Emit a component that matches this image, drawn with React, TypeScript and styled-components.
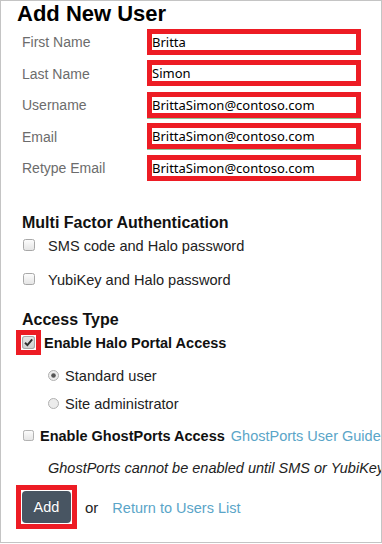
import React from 'react';
import styled, { createGlobalStyle } from 'styled-components';

const fields = [
  { label: 'First Name', value: 'Britta', underline: false },
  { label: 'Last Name', value: 'Simon', underline: false },
  { label: 'Username', value: 'BrittaSimon@contoso.com', underline: true },
  { label: 'Email', value: 'BrittaSimon@contoso.com', underline: true },
  { label: 'Retype Email', value: 'BrittaSimon@contoso.com', underline: false },
];

const Check = ({ checked = false, size = 12 }: { checked?: boolean; size?: number }) => (
  <svg width={size} height={size} viewBox="0 0 12 12">
    <defs>
      <linearGradient id={checked ? 'cbOn' : 'cbOff'} x1="0" y1="0" x2="0" y2="1">
        <stop offset="0" stopColor={checked ? '#e6e6e6' : '#fdfdfd'} />
        <stop offset="1" stopColor={checked ? '#cfcfcf' : '#e4e4e4'} />
      </linearGradient>
    </defs>
    <rect x="0.5" y="0.5" width="11" height="11" rx="2" fill={`url(#${checked ? 'cbOn' : 'cbOff'})`} stroke="#a8a8a8" />
    {checked && <path d="M2.8 6.2 L5 8.4 L9.4 3.2" fill="none" stroke="#2e2e2e" strokeWidth="1.8" />}
  </svg>
);

const Radio = ({ checked = false }: { checked?: boolean }) => (
  <svg width="11" height="11" viewBox="0 0 11 11">
    <circle cx="5.5" cy="5.5" r="5" fill="#ececec" stroke="#b0b0b0" />
    {checked && <circle cx="5.5" cy="5.5" r="2.3" fill="#555" />}
  </svg>
);

const AddUser = () => {
  return (
    <Frame>
      <GlobalStyle />
      <Title>Add New User</Title>
      <Body>
        <Form>
          {fields.map((f) => (
            <React.Fragment key={f.label}>
              <Label>{f.label}</Label>
              <Field underline={f.underline}>{f.value}</Field>
            </React.Fragment>
          ))}
        </Form>

        <Heading style={{ marginTop: 31 }}>Multi Factor Authentication</Heading>
        <Options>
          <Option>
            <BoxSlot>
              <Check />
            </BoxSlot>
            <OptionText>SMS code and Halo password</OptionText>
          </Option>
          <Option>
            <BoxSlot>
              <Check />
            </BoxSlot>
            <OptionText>YubiKey and Halo password</OptionText>
          </Option>
        </Options>

        <Heading style={{ marginTop: 18.5 }}>Access Type</Heading>
        <HaloRow>
          <Marker>
            <Check checked size={13} />
          </Marker>
          <Strong>Enable Halo Portal Access</Strong>
        </HaloRow>
        <Radios>
          <RadioRow>
            <Radio checked />
            <RadioText>Standard user</RadioText>
          </RadioRow>
          <RadioRow>
            <Radio />
            <RadioText>Site administrator</RadioText>
          </RadioRow>
        </Radios>

        <GhostRow>
          <BoxSlot>
            <Check size={11} />
          </BoxSlot>
          <Strong>Enable GhostPorts Access</Strong>
          <Link>GhostPorts User Guide</Link>
        </GhostRow>
        <Note>GhostPorts cannot be enabled until SMS or YubiKey is enabled.</Note>

        <Actions>
          <ButtonMarker>
            <AddButton>Add</AddButton>
          </ButtonMarker>
          <Or>or</Or>
          <Link>Return to Users List</Link>
        </Actions>
      </Body>
    </Frame>
  );
};

const GlobalStyle = createGlobalStyle`
  html, body {
    margin: 0;
    padding: 0;
    background: #fff;
  }
  body {
    font-family: "Liberation Sans", Arial, sans-serif;
  }
`;

const Frame = styled.div`
  width: 382px;
  height: 543px;
  box-sizing: border-box;
  border: 1px solid #c4c4c4;
  padding-left: 16px;
  overflow: hidden;
  white-space: nowrap;
  color: #222;
`;

const Title = styled.h1`
  margin: 0;
  font-size: 22px;
  line-height: 25px;
  font-weight: bold;
  color: #000;
`;

const Body = styled.div`
  padding-left: 5px;
`;

const Form = styled.div`
  display: grid;
  grid-template-columns: 125px 214px;
  grid-auto-rows: 31.5px;
  align-items: center;
`;

const Label = styled.div`
  font-size: 14px;
  color: #6c6c6c;
  padding-top: 1px;
`;

const Field = styled.div<{ underline: boolean }>`
  height: 26px;
  box-sizing: border-box;
  border: 5px solid #ed1c24;
  background: #fff;
  font-family: "Noto Sans", "Open Sans", sans-serif;
  font-size: 13px;
  line-height: 16px;
  color: #000;
  box-shadow: ${(p) => (p.underline ? '0 1px 0 #8cc79a' : 'none')};
`;

const Heading = styled.h3`
  margin: 0;
  font-size: 16px;
  line-height: 16px;
  font-weight: bold;
  color: #111;
`;

const Options = styled.div`
  display: flex;
  flex-direction: column;
  gap: 4px;
`;

const Option = styled.div`
  height: 29.5px;
  display: flex;
  align-items: center;
  gap: 13px;
`;

const BoxSlot = styled.span`
  display: flex;
  margin-left: 1px;
`;

const OptionText = styled.span`
  font-size: 14.6px;
  padding-top: 2px;
`;

const HaloRow = styled.div`
  margin-top: 2px;
  display: flex;
  align-items: center;
  gap: 3px;
`;

const Marker = styled.span`
  display: flex;
  margin-left: -6px;
  border: 5px solid #ed1c24;
  padding: 1px;
`;

const Strong = styled.span`
  font-size: 14.5px;
  font-weight: bold;
  color: #111;
  padding-top: 1px;
`;

const Radios = styled.div`
  margin-top: 6px;
  padding-left: 26px;
`;

const RadioRow = styled.div`
  height: 28px;
  display: flex;
  align-items: center;
  gap: 6px;
`;

const RadioText = styled.span`
  font-size: 14.6px;
  padding-top: 2px;
`;

const GhostRow = styled.div`
  margin-top: 6px;
  height: 24px;
  display: flex;
  align-items: center;
  gap: 6px;
`;

const Link = styled.a`
  font-size: 14.5px;
  color: #5aa5c8;
  text-decoration: none;
  cursor: pointer;
  padding-top: 1px;
`;

const Note = styled.div`
  margin-top: 13px;
  padding-left: 26px;
  font-size: 14.5px;
  line-height: 17px;
  font-style: italic;
  color: #222;
`;

const Actions = styled.div`
  margin-top: 8px;
  display: flex;
  align-items: center;
`;

const ButtonMarker = styled.span`
  display: flex;
  margin-left: -6px;
  border: 5px solid #ed1c24;
  padding: 1px;
`;

const AddButton = styled.button`
  width: 49px;
  height: 32px;
  border: none;
  border-radius: 4px;
  background: #485562;
  color: #fff;
  font-family: "Liberation Sans", Arial, sans-serif;
  font-size: 14.5px;
  text-shadow: 0 -1px 0 rgba(0, 0, 0, 0.3);
  padding: 0;
  cursor: pointer;
`;

const Or = styled.span`
  margin-left: 8px;
  margin-right: 14px;
  font-size: 15px;
  color: #222;
`;

export default AddUser;
